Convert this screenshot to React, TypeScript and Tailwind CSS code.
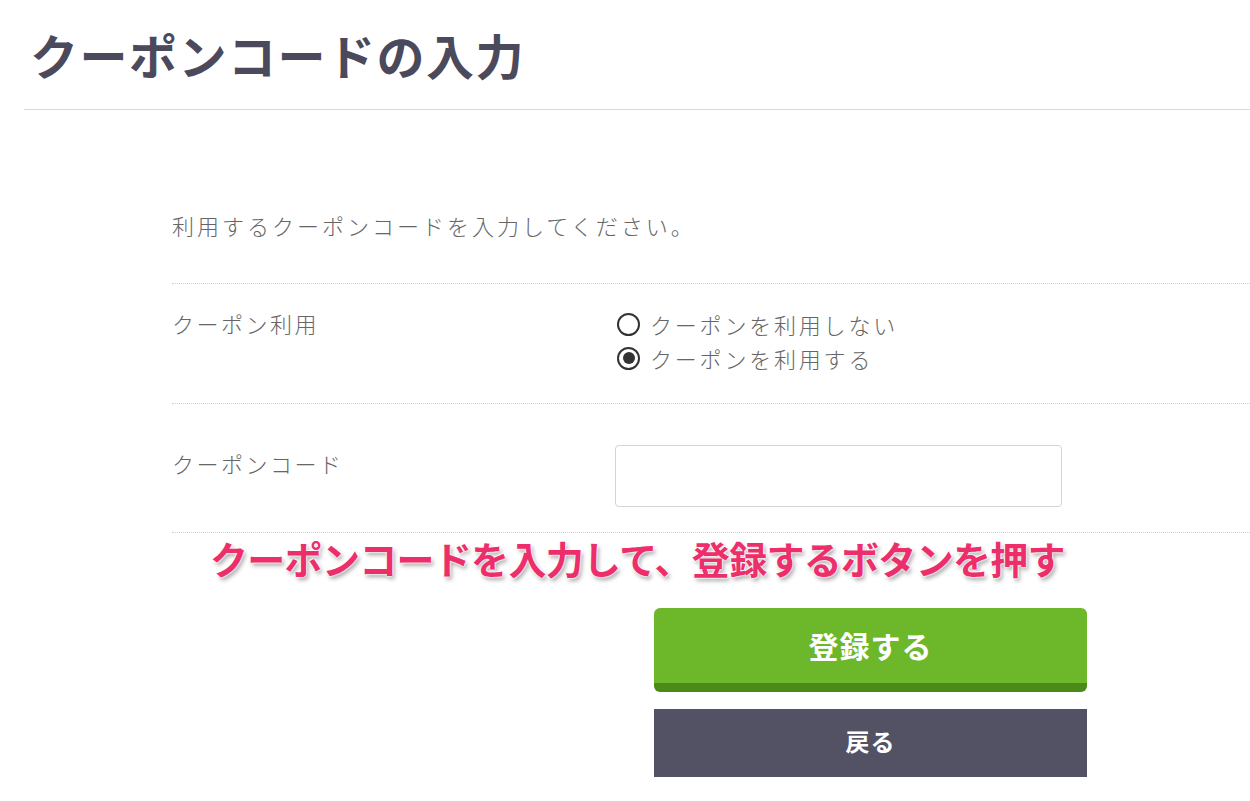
import { useState } from "react";

const jp = "font-['Noto_Sans_CJK_JP','Noto_Sans',sans-serif]";

function Radio({ checked, label, onClick }: { checked: boolean; label: string; onClick: () => void }) {
  return (
    <button type="button" onClick={onClick} className="flex items-center gap-[10px] h-[34px] text-left">
      <span className="w-[23px] h-[23px] rounded-full border-2 border-[#333] flex items-center justify-center shrink-0">
        {checked && <span className="w-[12px] h-[12px] rounded-full bg-[#333]" />}
      </span>
      <span className="text-[22px] leading-[34px] tracking-[2.8px] text-[#666] font-light">{label}</span>
    </button>
  );
}

export default function App() {
  const [use, setUse] = useState(true);

  return (
    <div className={`${jp} bg-white w-[1250px] h-[801px] overflow-hidden`}>
      {/* Page title */}
      <div className="ml-[24px] h-[110px] border-b border-[#d9d9d9] pl-[6px] pt-[30px]">
        <h1 className="text-[48px] leading-none font-bold text-[#4b4a5c] tracking-[1.5px]">クーポンコードの入力</h1>
      </div>

      <div className="pl-[172px]">
        <p className="mt-[99px] text-[22px] leading-[33px] tracking-[3px] text-[#666] font-light pb-[41px]">
          利用するクーポンコードを入力してください。
        </p>

        {/* Coupon use */}
        <div className="border-t border-dotted border-[#cfcfcf] flex pt-[23px] pb-[28px]">
          <div className="w-[443px] text-[22px] leading-[33px] tracking-[2.5px] text-[#666] font-light">クーポン利用</div>
          <div className="flex flex-col pl-[2px]">
            <Radio checked={!use} label="クーポンを利用しない" onClick={() => setUse(false)} />
            <Radio checked={use} label="クーポンを利用する" onClick={() => setUse(true)} />
          </div>
        </div>

        {/* Coupon code */}
        <div className="border-t border-dotted border-[#cfcfcf] flex items-start pt-[41px] pb-[25px]">
          <div className="w-[443px] mt-[2px] text-[22px] leading-[33px] tracking-[2.5px] text-[#666] font-light">クーポンコード</div>
          <input
            type="text"
            className="w-[447px] h-[62px] border border-[#d4d4d4] rounded-[4px] px-3 text-[20px] outline-none"
          />
        </div>

        <div className="border-t border-dotted border-[#cfcfcf]" />

        {/* Annotation */}
        <p className="ml-[38px] mt-[2px] text-[38px] leading-[46px] font-bold tracking-[-0.7px] text-[#ec2f6b] [text-shadow:0_0_2px_#fff,0_0_2px_#fff,0_0_2px_#fff,2px_3px_4px_rgba(0,0,0,0.35)]">
          クーポンコードを入力して、登録するボタンを押す
        </p>

        {/* Buttons */}
        <div className="ml-[482px] mt-[27px] w-[433px] flex flex-col gap-[17px]">
          <button className="h-[84px] rounded-[6px] bg-[#6db72b] border-b-[9px] border-[#4a8a18] text-white text-[30px] font-bold tracking-[1px]">
            登録する
          </button>
          <button className="h-[68px] bg-[#535264] text-white text-[24px] font-bold tracking-[1px] pb-[4px]">
            戻る
          </button>
        </div>
      </div>
    </div>
  );
}
